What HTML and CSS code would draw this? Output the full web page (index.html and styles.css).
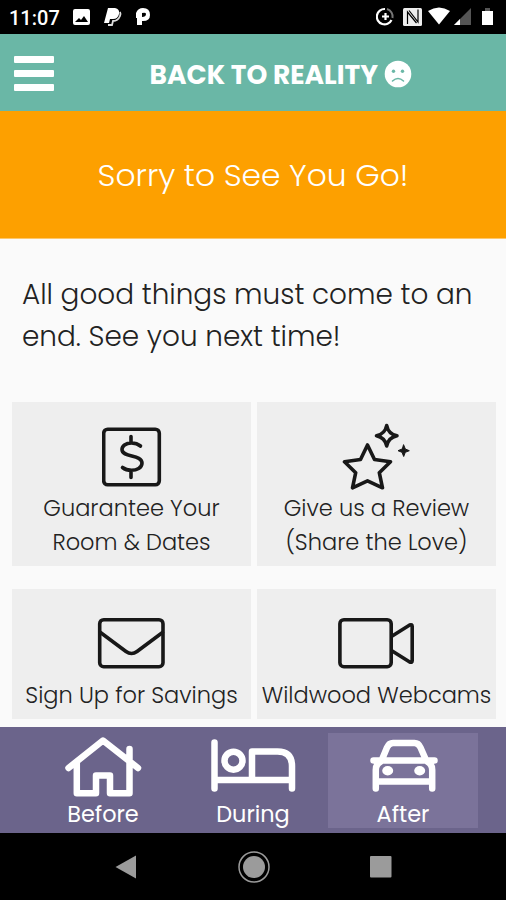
FILE: index.html
```html
<!DOCTYPE html>
<html lang="en">
<head>
    <meta charset="UTF-8">
    <meta name="viewport" content="width=device-width, initial-scale=1.0">
    <title>Back to Reality</title>
    <link rel="stylesheet" href="styles.css">
</head>
<body>
<!-- status bar -->
<div class="status">
    <span class="clock">11:07</span>
    <svg class="notifications" width="80" height="20" viewBox="0 0 80 20" fill="#fff">
        <path fill-rule="evenodd" d="M3 2h13q2 0 2 2v12q0 2-2 2H3q-2 0-2-2V4q0-2 2-2zM3 15h13l-4-6-3 4-2-2z"/>
        <path d="M36 1h7q5 1 4 6-1 5-6 5h-3l-1 4h-5z"/>
        <path d="M48 5q1 2 0 4-2 5-7 5l-1 4h-4" fill="none" stroke="#ddd" stroke-width="1.8"/>
        <path fill-rule="evenodd" d="M64 6q2-5 7-5 7 0 7 7 0 6-7 6h-1v4h-5v-7h-1zM70 6v4q4 0 4-3 0-2-4-1z"/>
    </svg>
    <svg class="signals" width="118" height="20" viewBox="0 0 118 20">
        <path d="M9 2a7.7 7.7 0 1 0 6.5 11" fill="none" stroke="#fff" stroke-width="2.2"/>
        <path d="M11 2a7.7 7.7 0 0 1 5.5 9" fill="none" stroke="#777" stroke-width="2"/>
        <path d="M9.5 6v7M6 9.5h7" stroke="#fff" stroke-width="2.2"/>
        <rect x="27" y="1" width="19" height="18" rx="1.5" fill="#eee"/>
        <path d="M31.5 17V5l9 11M42 2.5v12.5L33 3.5" fill="none" stroke="#000" stroke-width="1.2"/>
        <path d="M52 4q11-7 22 0L63 17.5z" fill="#fff"/>
        <path d="M95 1v17H78z" fill="#555"/>
        <path d="M84 12v6h-6z" fill="#fff"/>
        <path d="M109 1h5v3h-5z" fill="#555"/>
        <path d="M106 4h11v14h-11z" fill="#fff"/>
    </svg>
</div>

<div class="header">
    <div class="menu">
        <span></span>
        <span></span>
        <span></span>
    </div>
    <h1>BACK TO REALITY</h1>
    <svg class="sad" width="28" height="28" viewBox="0 0 28 28">
        <circle cx="14" cy="14" r="13.3" fill="#fff"/>
        <circle cx="9.5" cy="11.3" r="1.7" fill="#6ab7a6"/>
        <circle cx="18.5" cy="11.3" r="1.7" fill="#6ab7a6"/>
        <path d="M8.5 21q5.5-5 11 0" fill="none" stroke="#6ab7a6" stroke-width="1.6" stroke-linecap="round"/>
    </svg>
</div>

<div class="banner">Sorry to See You Go!</div>

<div class="content">
    <p class="intro">All good things must come to an<br>end. See you next time!</p>

    <div class="cards">
        <div class="card">
            <svg class="icon-dollar" width="60" height="60" viewBox="0.5 0 60 60">
                <rect x="2.2" y="2.2" width="55.6" height="55.6" rx="4"/>
                <path d="M29.5 9.5v6.5M29.5 43.5v7M39 19C36 16.5 33 16 30 16 24 16 20.5 19 20.5 22.5 20.5 31 40.5 27 40.5 36 40.5 41 35 43.3 30 43.3 26.5 43.3 23.5 42.5 21 40.5"/>
            </svg>
            <span>Guarantee Your</span>
            <span>Room &amp; Dates</span>
        </div>
        <div class="card">
            <svg width="70" height="68" viewBox="0 0 70 68">
                <path d="M25.5 22 32.5 36.5 48.5 38.7 37.3 49.7 40.5 64.8 25.5 57.8 10.5 64.8 13.7 49.7 2.5 38.7 18.5 36.5z"/>
                <path d="M44.7 2.5Q46.2 11 55 12.7 46.2 14.5 44.7 23 43 14.5 34.5 12.7 43 11 44.7 2.5z"/>
                <path class="solid" d="M61.7 22 63.3 26 67.3 27.7 63.3 29.3 61.7 33.5 60 29.3 56 27.7 60 26z"/>
            </svg>
            <span>Give us a Review</span>
            <span>(Share the Love)</span>
        </div>
        <div class="card">
            <svg class="icon-mail" width="69" height="52" viewBox="0 0 69 52">
                <rect x="2.7" y="2.7" width="63.3" height="47" rx="4"/>
                <path d="M3.5 15.5 29 34.5Q34.5 38.5 40 34.5L65.5 15.5"/>
            </svg>
            <span>Sign Up for Savings</span>
        </div>
        <div class="card">
            <svg class="icon-cam" width="78" height="52" viewBox="0.8 0 78 52">
                <rect x="2.7" y="2.7" width="51.3" height="47" rx="4"/>
                <path d="M55 19 72.5 8Q75 7 75 9.5V43.5Q75 46 72.5 45L55 34"/>
            </svg>
            <span>Wildwood Webcams</span>
        </div>
    </div>
</div>

<!-- bottom tabs -->
<div class="tabs">
    <div class="tab">
        <svg width="80" height="64" viewBox="0 0 80 64">
            <path d="M5.5 33 40 5.5 75 33M66.5 14v15M13.8 28v30.3h19.2V40.5H47v17.8h19.5V28"/>
        </svg>
        <span>Before</span>
    </div>
    <div class="tab">
        <svg width="88" height="64" viewBox="-0.5 0 88 64">
            <path d="M5 7.5v46M5 45h77M42.5 45V16.5H68q14.5 0 14.5 14.5V53.5"/>
            <circle cx="24" cy="25.7" r="9"/>
        </svg>
        <span>During</span>
    </div>
    <div class="tab active">
        <svg width="72" height="64" viewBox="-1 0 72 64">
            <path d="M13.8 25 19 12.5Q21 8 25 8h21.5q4 0 6 4.5L58 25M5.5 25.5h61M7.8 53.5V35q0-6 5-8.5M64.2 53.5V35q0-6-5-8.5M8 46.5h56"/>
            <ellipse class="lamp" cx="19.7" cy="35.7" rx="5.5" ry="4.7"/>
            <ellipse class="lamp" cx="51.7" cy="35.7" rx="5.5" ry="4.7"/>
        </svg>
        <span>After</span>
    </div>
</div>

<!-- android buttons -->
<div class="system">
    <svg width="24" height="26" viewBox="0 0 24 26"><path d="M1.5 13 22 1.5v23z" fill="#9b9b9b"/></svg>
    <svg width="34" height="34" viewBox="0 0 34 34">
        <circle cx="17" cy="17" r="15" fill="none" stroke="#9b9b9b" stroke-width="1.5"/>
        <circle cx="17" cy="17" r="11" fill="#9b9b9b"/>
    </svg>
    <svg width="22" height="22" viewBox="0 0 22 22"><rect width="21.5" height="21.5" rx="1" fill="#9b9b9b"/></svg>
</div>
</body>
</html>
```
FILE: styles.css
```css
body {
    margin: 0;
    width: 506px;
    height: 900px;
    overflow: hidden;
    background-color: #fafafa;
    color: #222;
    font-family: "Poppins", Inter, sans-serif;
    font-weight: 300;
}

svg {
    display: block;
    flex: none;
}

/* status bar */
.status {
    display: flex;
    align-items: center;
    height: 34px;
    background-color: #000;
    color: #fff;
}

.clock {
    width: 50px;
    margin-top: 2px;
    margin-left: 9px;
    font-family: Roboto, sans-serif;
    font-size: 20px;
    font-weight: 500;
    white-space: nowrap;
}

.notifications {
    margin-left: 13px;
}

.signals {
    margin-left: auto;
    margin-right: 12px;
}

/* header */
.header {
    display: flex;
    align-items: center;
    height: 77px;
    background-color: #6ab7a6;
    color: #fff;
}

.menu {
    display: flex;
    flex-direction: column;
    gap: 7px;
    width: 40px;
    margin-left: 14px;
    margin-top: 2px;
}

.menu span {
    height: 7px;
    border-radius: 1px;
    background-color: #fff;
}

h1 {
    width: 230px;
    margin: 5px 0 0 95.5px;
    font-size: 26.5px;
    font-weight: 700;
    white-space: nowrap;
}

.sad {
    margin: 3px 0 0 4.5px;
}

.banner {
    height: 127px;
    border-bottom: 1px solid #fdc76c;
    background-color: #fda000;
    color: #fff;
    font-size: 31.3px;
    line-height: 128px;
    text-align: center;
}

/* content */
.content {
    height: 488px;
}

.intro {
    margin: 0;
    padding: 35px 22px 44px;
    font-size: 27.9px;
    line-height: 42px;
    white-space: nowrap;
}

.cards {
    display: grid;
    grid-template-columns: 239px 239px;
    grid-template-rows: 164px 130px;
    gap: 23px 6px;
    padding-left: 12px;
}

.card {
    display: flex;
    flex-direction: column;
    justify-content: flex-end;
    align-items: center;
    box-sizing: border-box;
    padding-bottom: 7px;
    background-color: #eee;
    font-size: 22.5px;
    line-height: 34px;
    white-space: nowrap;
}

.card svg {
    fill: none;
    stroke: #181818;
    stroke-width: 3.6;
    stroke-linecap: round;
    stroke-linejoin: round;
}

.card .solid {
    fill: #181818;
    stroke-width: 1;
}

.icon-dollar {
    margin-bottom: 4px;
}

.icon-mail,
.icon-cam {
    margin-bottom: 9px;
}

/* bottom tabs */
.tabs {
    display: flex;
    justify-content: center;
    box-sizing: border-box;
    height: 106px;
    padding: 6px 28px;
    background-color: #6b648b;
    color: #fff;
}

.tab {
    display: flex;
    flex-direction: column;
    align-items: center;
    width: 150px;
    height: 95px;
    padding-top: 2px;
    box-sizing: border-box;
    font-size: 22.4px;
    font-weight: 400;
    line-height: 30px;
}

.tab svg {
    fill: none;
    stroke: #fff;
    stroke-width: 6.5;
    stroke-linecap: round;
    stroke-linejoin: round;
}

.tab .lamp {
    fill: #fff;
    stroke: none;
}

.active {
    background-color: #7b739a;
}

/* android buttons */
.system {
    display: flex;
    align-items: center;
    justify-content: center;
    gap: 99px;
    height: 67px;
    padding-right: 1px;
    background-color: #000;
}
```
